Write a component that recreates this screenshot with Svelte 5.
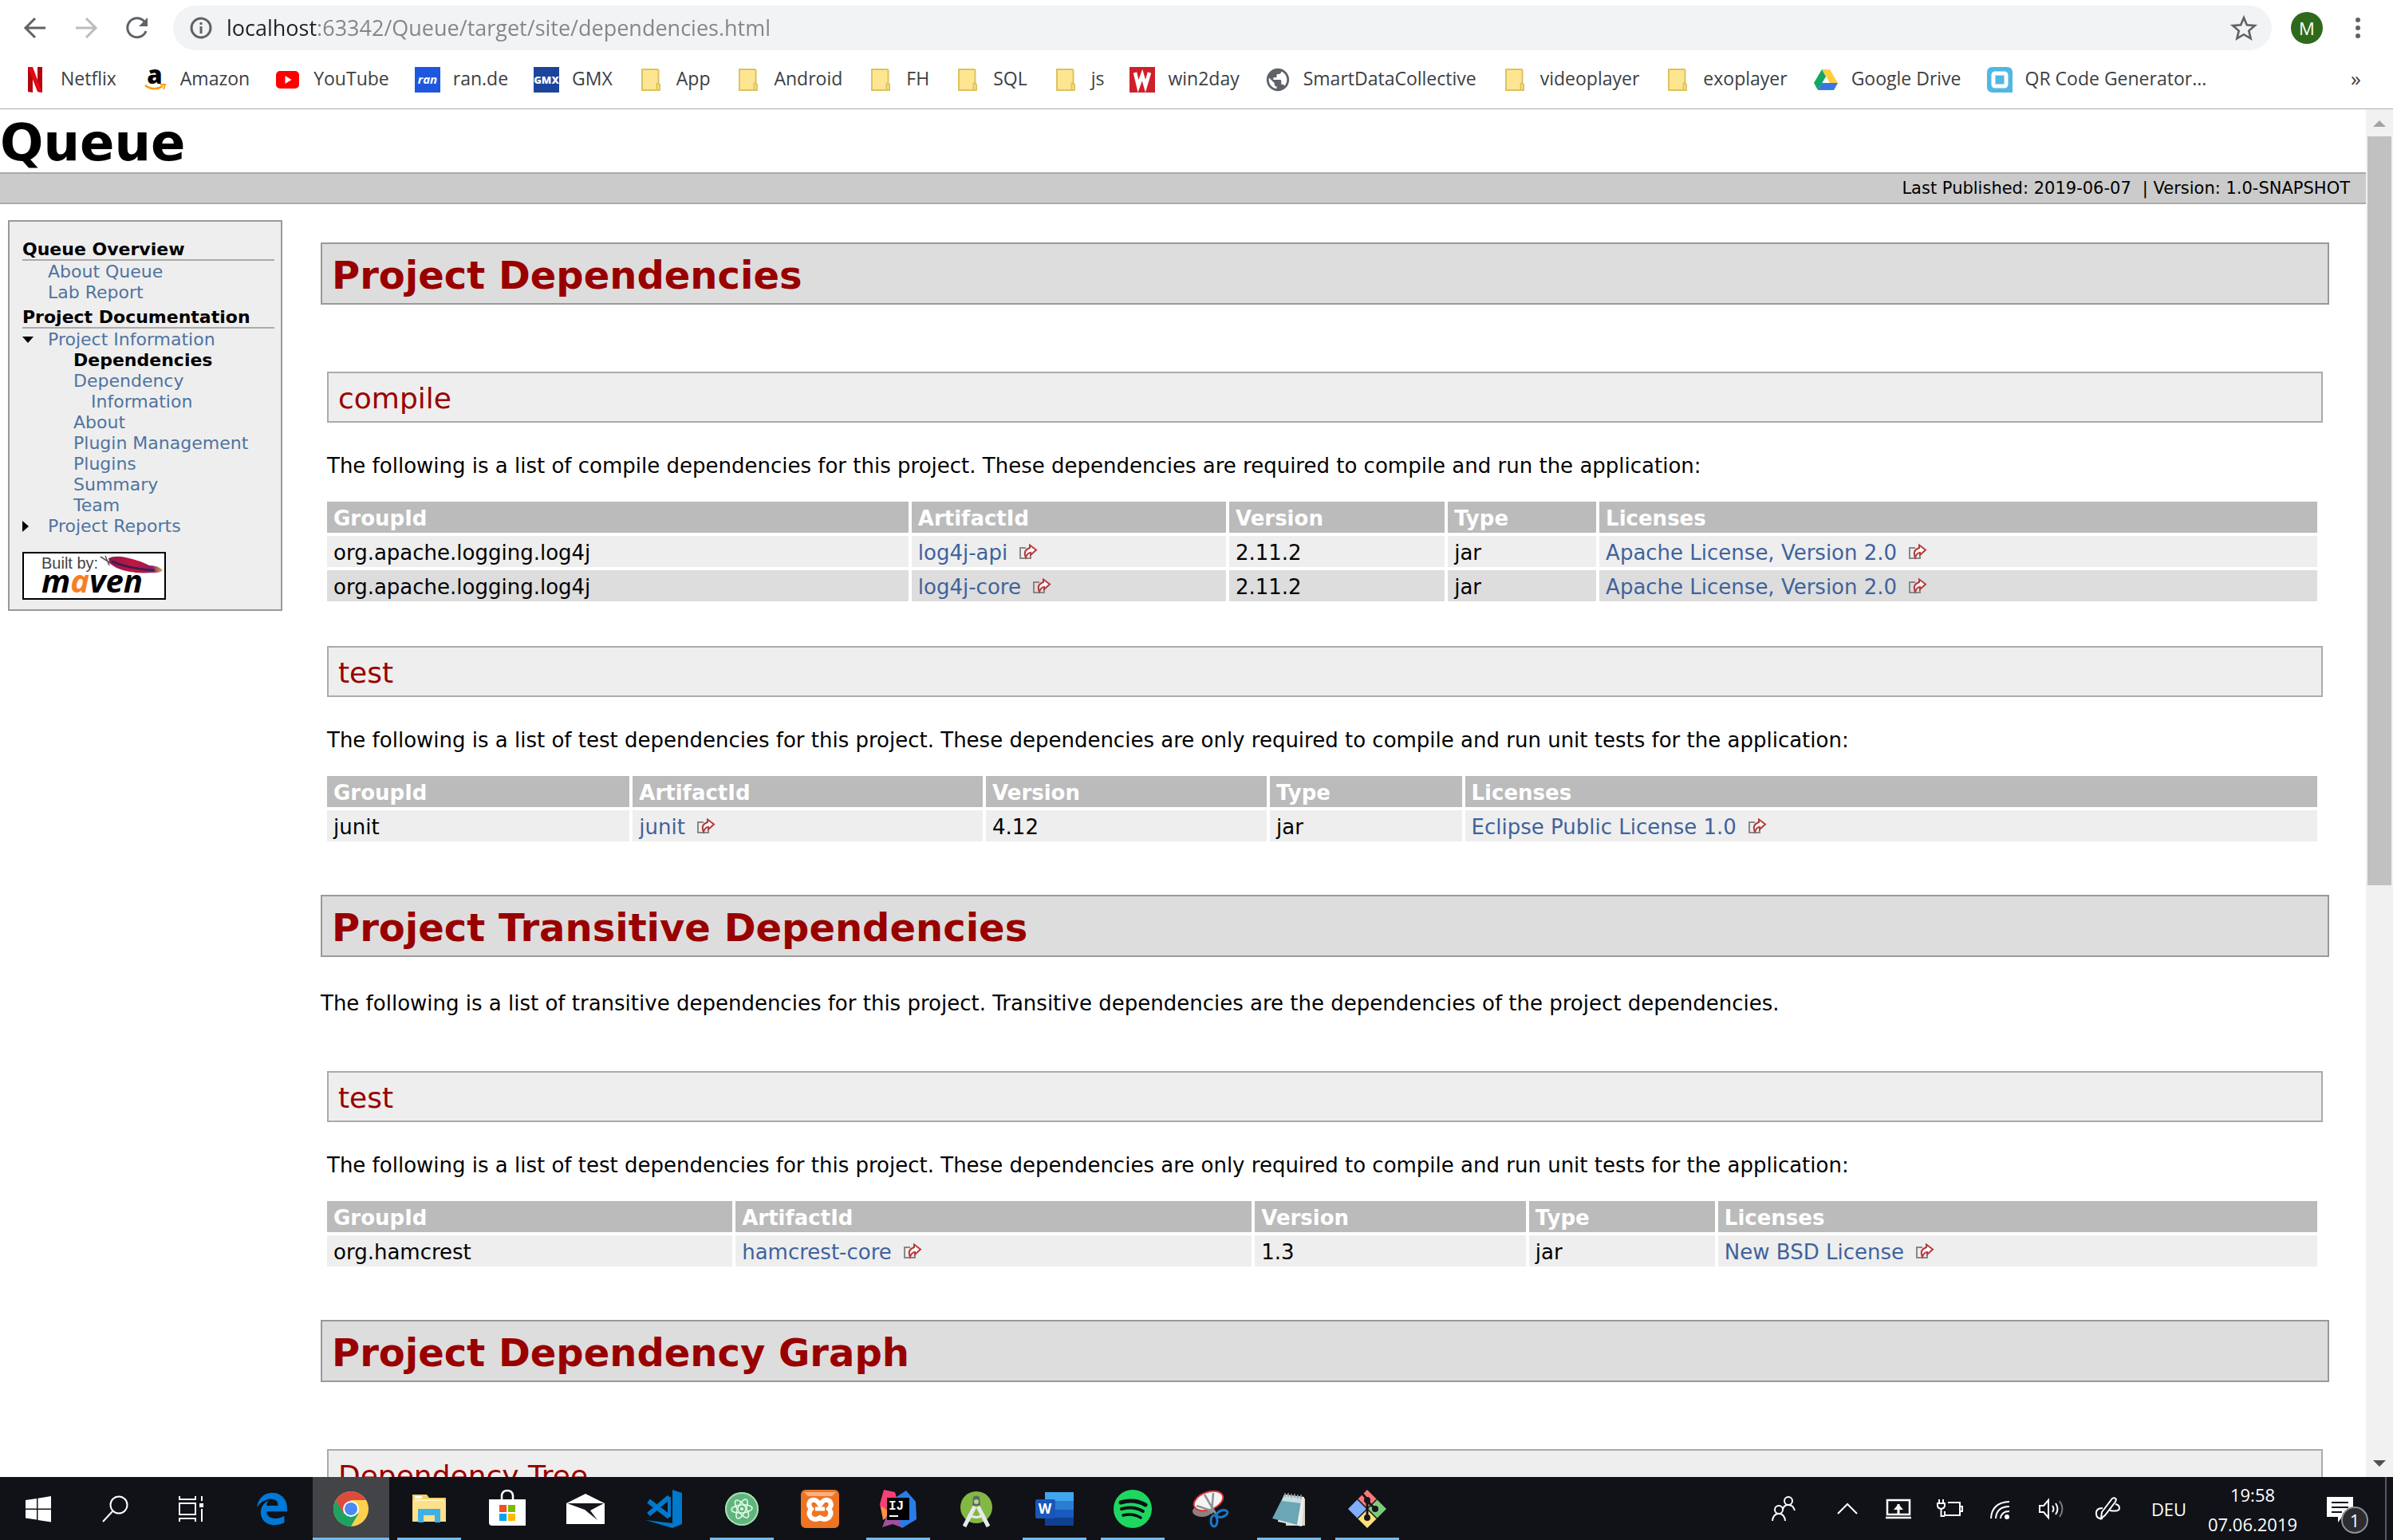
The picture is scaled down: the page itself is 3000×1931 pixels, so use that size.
<script>
  const bookmarks = [
    ['netflix', 'Netflix'], ['amazon', 'Amazon'], ['youtube', 'YouTube'], ['ran', 'ran.de'],
    ['gmx', 'GMX'], ['folder', 'App'], ['folder', 'Android'], ['folder', 'FH'],
    ['folder', 'SQL'], ['folder', 'js'], ['win2day', 'win2day'], ['globe', 'SmartDataCollective'],
    ['folder', 'videoplayer'], ['folder', 'exoplayer'], ['drive', 'Google Drive'], ['qr', 'QR Code Generator...']
  ];

  const infoLinks = ['Dependency Information', 'About', 'Plugin Management', 'Plugins', 'Summary', 'Team'];

  const columns = ['GroupId', 'ArtifactId', 'Version', 'Type', 'Licenses'];

  const compile = {
    title: 'compile',
    text: 'The following is a list of compile dependencies for this project. These dependencies are required to compile and run the application:',
    widths: [29.4, 15.9, 10.9, 7.5, 36.3],
    rows: [
      ['org.apache.logging.log4j', 'log4j-api', '2.11.2', 'jar', 'Apache License, Version 2.0'],
      ['org.apache.logging.log4j', 'log4j-core', '2.11.2', 'jar', 'Apache License, Version 2.0']
    ]
  };
  const test = {
    title: 'test',
    text: 'The following is a list of test dependencies for this project. These dependencies are only required to compile and run unit tests for the application:',
    widths: [15.3, 17.7, 14.2, 9.7, 43.1],
    rows: [['junit', 'junit', '4.12', 'jar', 'Eclipse Public License 1.0']]
  };
  const transitive = {
    title: 'test',
    text: test.text,
    widths: [20.5, 26.1, 13.7, 9.4, 30.3],
    rows: [['org.hamcrest', 'hamcrest-core', '1.3', 'jar', 'New BSD License']]
  };

  const apps = [
    ['start', 'Start'], ['search', 'Search'], ['taskview', 'Task View'], ['edge', 'Edge'],
    ['chrome', 'Chrome', 'active'], ['explorer', 'File Explorer', 'open'], ['store', 'Store'], ['mail', 'Mail'],
    ['vscode', 'VS Code'], ['atom', 'Atom', 'open'], ['xampp', 'XAMPP'], ['idea', 'IntelliJ IDEA', 'open'],
    ['studio', 'Android Studio'], ['word', 'Word', 'open'], ['spotify', 'Spotify', 'open'], ['snip', 'Snipping Tool'],
    ['notepad', 'Notepad', 'open'], ['git', 'Git Bash', 'open']
  ];
  const tray = [
    ['people', 'People'], ['chevron', 'Show hidden icons'], ['update', 'Update'], ['power', 'Power'],
    ['wifi', 'Network'], ['sound', 'Volume'], ['pen', 'Ink Workspace']
  ];

  let address = $state('localhost:63342/Queue/target/site/dependencies.html');
</script>

{#snippet favicon(name)}
  <svg class="favicon" viewBox="0 0 32 32" aria-hidden="true">
    {#if name === 'netflix'}
      <path d="M7 0h6v32l-6-1z" fill="#b1060f" /><path d="M19 0h6v32l-6-1z" fill="#b1060f" /><path d="M7 0h6l12 32-6-1z" fill="#e50914" />
    {:else if name === 'amazon'}
      <text x="16" y="21" text-anchor="middle" font-family="Open Sans, sans-serif" font-weight="800" font-size="31" fill="#000">a</text>
      <path d="M4 23q11 8 22 1" fill="none" stroke="#f90" stroke-width="2.4" /><path d="M23 22h6l-2 6" fill="none" stroke="#f90" stroke-width="1.8" />
    {:else if name === 'youtube'}
      <rect x="1" y="5" width="29" height="22" rx="5" fill="#f00" /><path d="M12.5 11v10l8-5z" fill="#fff" />
    {:else if name === 'ran'}
      <rect width="32" height="32" fill="#1d57e0" /><text x="16" y="21" text-anchor="middle" font-family="Open Sans, sans-serif" font-weight="700" font-style="italic" font-size="15" fill="#fff">ran</text>
    {:else if name === 'gmx'}
      <rect width="32" height="32" fill="#1c449b" /><text x="16" y="21" text-anchor="middle" font-family="Open Sans, sans-serif" font-weight="800" font-size="13" fill="#fff">GMX</text>
    {:else if name === 'folder'}
      <path d="M5 3h19q1.5 0 1.5 1.5v16l1.5 1.5v7H5z" fill="#fee592" stroke="#dcc35e" stroke-width="2" /><path d="M23.5 29v-7q0-2 2-2" fill="none" stroke="#dcc35e" stroke-width="2" />
    {:else if name === 'win2day'}
      <rect width="32" height="32" fill="#cf1f2b" /><path d="M7 7l4 17 5-14 4 14 5-17" fill="none" stroke="#fff" stroke-width="4.5" />
    {:else if name === 'globe'}
      <svg x="-1" y="-1" width="34" height="34" viewBox="0 0 24 24"><path fill="#5f6368" d="M12 2C6.48 2 2 6.48 2 12s4.48 10 10 10 10-4.48 10-10S17.52 2 12 2zm-1 17.93c-3.950-.490-7-3.850-7-7.930 0-.620.080-1.210.210-1.790L9 15v1c0 1.100.900 2 2 2v1.930zm6.900-2.540c-.260-.810-1-1.390-1.900-1.390h-1v-3c0-.550-.450-1-1-1H8v-2h2c.550 0 1-.450 1-1V7h2c1.100 0 2-.900 2-2v-.410c2.930 1.190 5 4.060 5 7.410 0 2.080-.800 3.970-2.100 5.390z" /></svg>
    {:else if name === 'drive'}
      <path d="M11 3h10l10 17H21z" fill="#ffcf3f" /><path d="M11 3l5 9L6 29 1 20z" fill="#11a861" /><path d="M11 20h20l-5 9H6z" fill="#3777e3" />
    {:else if name === 'qr'}
      <path d="M7 0h18q7 0 7 7v25H7q-7 0-7-7V7q0-7 7-7z" fill="#50b7e4" /><rect x="8" y="8" width="16" height="16" rx="2" fill="none" stroke="#fff" stroke-width="5" />
    {/if}
  </svg>
{/snippet}

{#snippet appIcon(name)}
  <svg class="app-icon" viewBox="0 0 48 48" aria-hidden="true">
    {#if name === 'start'}
      <path d="M8 13l14-2v12.5H8zM23.5 10.8L40 8v15.5H23.5zM8 25h14v12.5L8 35.5zM23.5 25H40v15.5l-16.5-2.5z" fill="#fff" />
    {:else if name === 'search'}
      <circle cx="27" cy="19" r="10.5" fill="none" stroke="#fff" stroke-width="2" /><path d="M19.5 26.5L7 40" stroke="#fff" stroke-width="2" />
    {:else if name === 'taskview'}
      <g fill="none" stroke="#fff" stroke-width="2"><path d="M5 8v4h20V8M5 40v-4h20v4M5 17h20v14H5zM33 8v6M33 24v16" /></g><rect x="30" y="17" width="5" height="5" fill="#fff" />
    {:else if name === 'edge'}
      <svg x="2" y="3" width="42" height="42" viewBox="0 0 512 512"><path fill="#0078d7" d="M486.29 243.67c0-44-7.76-84.46-28.81-122.4C416.5 47.88 343.91 8 258.89 8 119 7.72 40.62 113.21 26.06 227.68c42.42-61.31 117.07-121.38 220.37-125 0 0 109.67 0 99.42 105H170c6.37-37.39 18.55-59 34.34-78.93-75.05 34.9-121.85 96.1-120.75 188.32.83 71.45 50.13 144.84 120.75 172 83.35 31.84 192.77 7.2 240.13-21.33V363.31c-80.87 56.49-270.87 60.92-272.26-67.57h314.08z" /></svg>
    {:else if name === 'chrome'}
      <circle cx="24" cy="24" r="22" fill="#fdd14d" />
      <path d="M5 13A22 22 0 0 1 43 13H24l-10 17z" fill="#dd4b3e" /><path d="M5 13A22 22 0 0 0 24 46l9.5-16.5h-19z" fill="#1da25f" /><circle cx="24" cy="24" r="10" fill="#fff" /><circle cx="24" cy="24" r="8" fill="#4a8af4" />
    {:else if name === 'explorer'}
      <path d="M3 6h18l3 4h21v30H3z" fill="#f3cf62" /><path d="M5 12h38v5H5z" fill="#fff3c4" /><path d="M3 14h42v26H3z" fill="#fde08a" /><rect x="6" y="8" width="9" height="3" fill="#fff" /><path d="M10 41V24h28v17h-7V32H17v9z" fill="#3fb0e6" />
    {:else if name === 'store'}
      <path d="M17 13V7q1-6 7-6t7 6v6" fill="none" stroke="#fff" stroke-width="2.5" /><path d="M1 12h46v33H5q-4 0-4-4z" fill="#fff" /><path d="M14 19h9v9h-9z" fill="#f25022" /><path d="M25 19h9v9h-9z" fill="#7fba00" /><path d="M14 30h9v9h-9z" fill="#00a4ef" /><path d="M25 30h9v9h-9z" fill="#ffb900" />
    {:else if name === 'mail'}
      <path d="M0 17L24 5l24 12v26H0z" fill="#fff" /><path d="M1 17h46L30 26l9 12-16-13z" fill="#14161b" />
    {:else if name === 'vscode'}
      <path d="M35 0l12 4v39l-12 5L1 38l34 4z" fill="#0078cc" /><path d="M5 14L31 34M31 9L5 31" stroke="#0078cc" stroke-width="6" /><path d="M31 9v25" stroke="#0078cc" stroke-width="4" />
    {:else if name === 'atom'}
      <circle cx="24" cy="24" r="21" fill="#5fb57d" /><circle cx="24" cy="24" r="20" fill="none" stroke="#a8dfb4" stroke-width="2" />
      <g fill="none" stroke="#e3fbe6" stroke-width="1.6"><ellipse cx="24" cy="24" rx="5" ry="13" transform="rotate(25 24 24)" /><ellipse cx="24" cy="24" rx="5" ry="13" transform="rotate(85 24 24)" /><ellipse cx="24" cy="24" rx="5" ry="13" transform="rotate(-35 24 24)" /></g><circle cx="24" cy="24" r="2" fill="#e3fbe6" />
    {:else if name === 'xampp'}
      <rect width="48" height="48" rx="6" fill="#ee7424" /><path d="M4 3h40l-5 5H9z" fill="#f9b183" /><path d="M12 14q5-3 9 1l3 4 3-4q4-4 9-1 4 5-1 10 5 5 0 11-5 4-11 0-6 4-11 0-5-5 0-11-5-5-1-10z" fill="none" stroke="#fff" stroke-width="6" /><path d="M18 24h12" stroke="#fff" stroke-width="5" />
    {:else if name === 'idea'}
      <path d="M6 0l14 3 4 14L4 32 1 18z" fill="#f83f76" /><path d="M2 20l14 10-11 8z" fill="#f9953b" /><path d="M34 1l12 14 1 22-18 11-12-8V12z" fill="#2a7de8" /><path d="M4 47l14-36 10 36-11-4z" fill="#a0509f" /><rect x="10" y="10" width="28" height="28" fill="#000" /><text x="12" y="25" font-family="Liberation Mono, monospace" font-weight="700" font-size="16" fill="#fff">IJ</text><rect x="13" y="32" width="11" height="2" fill="#fff" />
    {:else if name === 'studio'}
      <circle cx="24" cy="22" r="20" fill="#83b843" /><path d="M20 9q4-3 8 0l1 11H19z" fill="#5d6870" /><circle cx="24" cy="15" r="3" fill="#b8d493" /><path d="M22 21L9 46M26 21l13 25" stroke="#e6e9e9" stroke-width="5" /><path d="M14 31q10 7 20 0" fill="none" stroke="#e6e9e9" stroke-width="3" />
    {:else if name === 'word'}
      <path d="M12 3h36v11H12z" fill="#41a5ee" /><path d="M12 14h36v11H12z" fill="#2b7cd3" /><path d="M12 25h36v10H12z" fill="#185abd" /><path d="M12 35h36v10H12z" fill="#103f91" /><rect y="12" width="25" height="24" rx="2" fill="#1a56b8" /><text x="12" y="30" text-anchor="middle" font-family="Open Sans, sans-serif" font-weight="700" font-size="17" fill="#fff">W</text>
    {:else if name === 'spotify'}
      <circle cx="24" cy="24" r="24" fill="#1ed760" /><g fill="none" stroke="#0c1015" stroke-linecap="round"><path d="M9 16q17-5 31 3" stroke-width="5" /><path d="M10 24q15-4 27 3" stroke-width="4" /><path d="M12 32q12-3 22 3" stroke-width="3.5" /></g>
    {:else if name === 'snip'}
      <ellipse cx="13" cy="27" rx="12" ry="7" fill="#8c8080" /><ellipse cx="21" cy="14" rx="19" ry="11" transform="rotate(-20 21 14)" fill="#f4f4f4" stroke="#d33" stroke-width="2" /><path d="M16 6l14 24M27 4l-2 26M6 20l24 8" stroke="#8d949b" stroke-width="2.5" /><g fill="none" stroke="#1c78c8" stroke-width="3"><ellipse cx="38" cy="30" rx="7" ry="4" transform="rotate(-20 38 30)" /><ellipse cx="28" cy="39" rx="4" ry="7" /></g>
    {:else if name === 'notepad'}
      <path d="M20 7l24 4v34H20z" fill="#d9d6c4" /><path d="M19 6l24 3-3 37L10 40z" fill="#e8eeee" /><path d="M18 6l22 3-6 35L3 36z" fill="#6ba6b4" /><path d="M18 6l22 3-1 8-24-3z" fill="#c7dde2" /><path d="M19 4v5M23 4v5M27 5v5M31 5v5M35 6v5M39 6v5" stroke="#999" stroke-width="1.5" />
    {:else if name === 'git'}
      <path d="M24 0l12 12-12 12-12-12z" fill="#f7797d" /><path d="M12 12l12 12-12 12L0 24z" fill="#81aeff" /><path d="M36 12l12 12-12 12-12-12z" fill="#7fc97c" /><path d="M24 24l12 12-12 12-12-12z" fill="#ffe07a" />
      <g fill="none" stroke="#14161b"><path d="M12 12l24 24M36 12L12 36" stroke-width="1.5" /><path d="M18 5l6 7v22M24 14l9 9" stroke-width="3" /></g><circle cx="24" cy="35" r="4" fill="#14161b" /><circle cx="34" cy="24" r="4" fill="#14161b" /><circle cx="24" cy="13" r="4" fill="#14161b" />
    {/if}
  </svg>
{/snippet}

{#snippet trayIcon(name)}
  <svg class="tray-icon" viewBox="0 0 32 32" fill="none" stroke="#fff" stroke-width="2" aria-hidden="true">
    {#if name === 'people'}
      <circle cx="22" cy="6" r="5" /><path d="M15 17q1-6 7-6t8 7" /><circle cx="10" cy="17" r="5" /><path d="M2 31q1-9 8-9t8 9" />
    {:else if name === 'chevron'}
      <path d="M4 22L16 10l12 12" />
    {:else if name === 'update'}
      <path d="M2 5h28v18H2zM0 27h32" stroke-width="2.5" /><path d="M16 10v12" stroke-width="3" /><path d="M10 17l6-7 6 7z" fill="#fff" stroke="none" />
    {:else if name === 'power'}
      <path d="M14 8h15v16H10v-5M30 13h2v6h-2" /><path d="M3 4v5M8 4v5M1 9h9v3q0 3-4.500 4Q1 15 1 12zM5.500 16v9H10" />
    {:else if name === 'wifi'}
      <path d="M4 28Q5 8 27 7" /><path d="M10 28q1-15 17-15" /><path d="M16 28q1-9 11-9" /><circle cx="24" cy="26" r="3" fill="#fff" stroke="none" />
    {:else if name === 'sound'}
      <path d="M1 12h5l6-7v22l-6-7H1z" /><path d="M17 12q3 4 0 8M21 9q5 7 0 14" /><path d="M26 6q7 10 0 20" stroke="#777b80" />
    {:else if name === 'pen'}
      <path d="M9 20L22 3q3-2 5 1l-1 3-13 17-5 4z" /><path d="M10 15q-9 0-8 8 1 6 8 5M19 18q12 2 12-3 0-4-5-5" />
    {/if}
  </svg>
{/snippet}

{#snippet external()}
  <svg class="external" viewBox="0 0 22 20" aria-hidden="true">
    <path d="M8 5H1v13h13v-3" fill="none" stroke="#888" stroke-width="2" />
    <path d="M13 1.5L21 7.500l-7 6.500v-3q-4 0-6 6-4-9 5-12z" fill="#fff" stroke="#b5393c" stroke-width="2" />
  </svg>
{/snippet}

{#snippet dependencySection(data)}
  <section class="scope">
    <h3>{data.title}</h3>
    <p>{data.text}</p>
    <table>
      <colgroup>
        {#each data.widths as width}<col style="width: {width}%" />{/each}
      </colgroup>
      <thead>
        <tr>{#each columns as column}<th scope="col">{column}</th>{/each}</tr>
      </thead>
      <tbody>
        {#each data.rows as row}
          <tr>
            {#each row as cell, i}
              <td>{#if i === 1 || i === 4}<a href="#{cell}">{cell}{@render external()}</a>{:else}{cell}{/if}</td>
            {/each}
          </tr>
        {/each}
      </tbody>
    </table>
  </section>
{/snippet}

<div class="desktop">
  <header class="browser">
    <div class="toolbar">
      <button class="nav" aria-label="Back"><svg viewBox="0 0 32 32"><path d="M29 16H5M16 4L4 16l12 12" fill="none" stroke="#5f6368" stroke-width="3" /></svg></button>
      <button class="nav" aria-label="Forward"><svg viewBox="0 0 32 32"><path d="M3 16h24M16 4l12 12-12 12" fill="none" stroke="#babcbe" stroke-width="3" /></svg></button>
      <button class="nav" aria-label="Reload"><svg viewBox="0 0 32 32"><path d="M27 20A12 12 0 1 1 25 8" fill="none" stroke="#5f6368" stroke-width="3" /><path d="M29 3v11H18z" fill="#5f6368" /></svg></button>
      <div class="omnibox">
        <svg class="info" viewBox="0 0 28 28" aria-hidden="true"><circle cx="14" cy="14" r="12" fill="none" stroke="#5f6368" stroke-width="3" /><path d="M14 12v9M14 7v3" stroke="#5f6368" stroke-width="3" /></svg>
        <input aria-label="Address" bind:value={address} spellcheck="false" />
        <button class="star" aria-label="Bookmark this page"><svg viewBox="0 0 32 32"><path d="M16 4l3.6 8.5 9.4.8-7.1 6.1 2.2 9.1L16 23.7l-8.100 4.800 2.200-9.100L3 13.300l9.400-.800z" fill="none" stroke="#5f6368" stroke-width="2.5" /></svg></button>
      </div>
      <button class="avatar" aria-label="Profile">M</button>
      <button class="more" aria-label="Menu"><svg viewBox="0 0 8 28"><circle cx="4" cy="4" r="3" /><circle cx="4" cy="14" r="3" /><circle cx="4" cy="24" r="3" /></svg></button>
    </div>
    <nav class="bookmarks" aria-label="Bookmarks">
      <div class="bookmark-list">
        {#each bookmarks as [icon, label]}
          <a href="#{label}">{@render favicon(icon)}<span>{label}</span></a>
        {/each}
      </div>
      <button class="overflow" aria-label="More bookmarks">»</button>
    </nav>
  </header>

  <div class="viewport">
    <div class="page">
      <h1>Queue</h1>
      <div class="breadcrumbs"><span>Last Published: 2019-06-07</span><span>| Version: 1.0-SNAPSHOT</span></div>
      <div class="columns">
        <nav class="sidebar" aria-label="Site">
          <h5>Queue Overview</h5>
          <ul>
            <li><a href="#about">About Queue</a></li>
            <li><a href="#report">Lab Report</a></li>
          </ul>
          <h5>Project Documentation</h5>
          <ul>
            <li class="expanded">
              <svg class="marker" viewBox="0 0 14 14" aria-hidden="true"><path d="M0 3h14l-7 8z" /></svg>
              <a href="#information">Project Information</a>
              <ul>
                <li><strong>Dependencies</strong></li>
                {#each infoLinks as link}<li><a href="#{link}">{link}</a></li>{/each}
              </ul>
            </li>
            <li class="collapsed">
              <svg class="marker" viewBox="0 0 14 14" aria-hidden="true"><path d="M0 0v14l8-7z" /></svg>
              <a href="#reports">Project Reports</a>
            </li>
          </ul>
          <a class="maven" href="#maven" aria-label="Built by Maven">
            <svg viewBox="0 0 180 60">
              <defs><linearGradient id="feather"><stop offset="0" stop-color="#8c1a4d" /><stop offset="0.45" stop-color="#c4153f" /><stop offset="0.8" stop-color="#8d1f5c" /><stop offset="1" stop-color="#d9b45c" /></linearGradient></defs>
              <rect x="1" y="1" width="178" height="58" fill="#fff" stroke="#000" stroke-width="2" />
              <text x="24" y="21" font-family="Liberation Sans, sans-serif" font-size="20" fill="#444">Built by:</text>
              <text x="24" y="51" font-family="Open Sans, sans-serif" font-size="40" font-weight="700" font-style="italic">m<tspan fill="#f77f23">a</tspan>ven</text>
              <path d="M98 6l14 9M104 5l5 12" stroke="#555" stroke-width="1.5" />
              <path d="M108 8q8-4 22-1 18 4 29 10 12 0 17 6-4 4-14 3-26 2-44-6-10-5-10-12z" fill="url(#feather)" />
              <path d="M112 12q24 10 54 11" fill="none" stroke="#3c1b56" stroke-width="2.5" />
            </svg>
          </a>
        </nav>

        <main>
          <h2>Project Dependencies</h2>
          <div class="after-title">{@render dependencySection(compile)}</div>
          {@render dependencySection(test)}
          <h2>Project Transitive Dependencies</h2>
          <p class="intro">The following is a list of transitive dependencies for this project. Transitive dependencies are the dependencies of the project dependencies.</p>
          {@render dependencySection(transitive)}
          <h2>Project Dependency Graph</h2>
          <section class="scope after-title"><h3>Dependency Tree</h3></section>
        </main>
      </div>
    </div>
    <div class="scrollbar" aria-hidden="true">
      <svg viewBox="0 0 34 34"><path d="M9 22l8-8 8 8z" fill="#a3a3a3" /></svg>
      <div class="track"><div class="thumb"></div></div>
      <svg viewBox="0 0 34 34"><path d="M9 13l8 8 8-8z" fill="#505050" /></svg>
    </div>
  </div>

  <footer class="taskbar">
    <div class="apps">
      {#each apps as [icon, label, status]}
        <button class="app {status ?? ''}" aria-label={label}>{@render appIcon(icon)}</button>
      {/each}
    </div>
    <div class="tray">
      {#each tray as [icon, label]}
        <button class={icon} aria-label={label}>{@render trayIcon(icon)}</button>
      {/each}
      <button class="language">DEU</button>
      <button class="clock"><span>19:58</span><span>07.06.2019</span></button>
      <button class="action" aria-label="Notifications">
        <svg viewBox="0 0 34 34" aria-hidden="true"><path d="M0 2h33v25H19l-5 7v-7H0z" fill="#fff" /><path d="M6 9h21M6 15h21M6 21h13" stroke="#101217" stroke-width="2" /></svg>
        <span class="badge">1</span>
      </button>
      <button class="show-desktop" aria-label="Show desktop"></button>
    </div>
  </footer>
</div>

<style>
  :global(body) { margin: 0; overflow: hidden; background: #fff; }
  * { box-sizing: border-box; }
  button { border: 0; padding: 0; margin: 0; background: none; font: inherit; color: inherit; display: flex; align-items: center; justify-content: center; }
  a { text-decoration: none; }
  svg { display: block; overflow: visible; }
  .desktop { height: 100vh; display: flex; flex-direction: column; font-family: "DejaVu Sans", Verdana, sans-serif; font-size: 26px; color: #000; }

  .browser { flex: none; padding-top: 7px; border-bottom: 1px solid #a9abad; font-family: "Open Sans", "Segoe UI", sans-serif; background: #fff; }
  .toolbar { display: flex; align-items: center; height: 56px; padding: 0 40px 0 12px; }
  .nav { width: 64px; height: 56px; }
  .nav svg { width: 32px; height: 32px; }
  .omnibox { flex: 1; display: flex; align-items: center; height: 56px; margin-left: 13px; padding: 0 18px 0 21px; border-radius: 28px; background: #f1f3f4; }
  .info { width: 28px; height: 28px; }
  input { flex: 1; height: 56px; margin-left: 18px; padding: 0 0 2px; border: 0; outline: 0; font: inherit; font-size: 27px; color: transparent; background: linear-gradient(90deg, #202124 113px, #80868b 113px); background-clip: text; }
  .star svg { width: 34px; height: 34px; }
  .avatar { width: 40px; height: 40px; margin-left: 24px; border-radius: 50%; background: #2f691b; color: #fff; font-size: 22px; }
  .more { width: 8px; margin-left: 40px; }
  .more svg { width: 8px; height: 28px; fill: #5f6368; }
  .bookmarks { display: flex; align-items: center; justify-content: space-between; height: 73px; padding: 0 40px 0 28px; color: #3c4043; font-size: 23px; }
  .bookmark-list { display: flex; gap: 32px; }
  .bookmark-list a { display: flex; align-items: center; gap: 16px; color: inherit; white-space: nowrap; }
  .bookmark-list span { padding-bottom: 3px; }
  .favicon { width: 32px; height: 32px; }
  .overflow { padding-bottom: 3px; font-size: 26px; }

  .viewport { flex: 1; min-height: 0; display: flex; overflow: hidden; }
  .page { flex: 1; min-width: 0; overflow: hidden; }
  h1, h2, h3, h5, p, ul { margin: 0; padding: 0; }
  h1 { padding-top: 5px; font-size: 64px; line-height: 74px; }
  .breadcrumbs { display: flex; justify-content: flex-end; gap: 14px; height: 40px; padding-right: 20px; border: solid #aaa; border-width: 2px 0; background: #cbcbcb; font-size: 21px; line-height: 37px; }
  .columns { display: flex; align-items: flex-start; }
  .sidebar { flex: none; width: 344px; margin: 20px 0 0 10px; padding: 22px 8px 12px 16px; border: 2px solid #999; background: #eee; font-size: 22px; line-height: 26px; }
  h5 { margin-bottom: 1px; border-bottom: 2px solid #aaa; font-size: 22px; line-height: 25px; white-space: nowrap; }
  ul + h5 { margin-top: 5px; }
  li { display: block; padding-left: 32px; white-space: nowrap; }
  li a { color: #4f74a0; }
  li li { padding: 0 24px 0 54px; text-indent: -22px; white-space: normal; }
  .expanded, .collapsed { display: grid; grid-template-columns: 32px 1fr; align-items: center; padding-left: 0; }
  .expanded ul { grid-column: 1 / -1; padding-left: 32px; }
  .marker { width: 14px; height: 14px; }
  .maven { display: block; width: 180px; margin-top: 19px; }

  main { flex: 1; min-width: 0; margin: 48px 46px 0 48px; }
  h2 { padding: 4px 12px 0; border: 2px solid #999; background: #ddd; color: #900; font-size: 48px; line-height: 70px; white-space: nowrap; }
  h3 { padding: 3px 12px 0; border: 2px solid #aaa; background: #eee; color: #900; font-size: 36px; font-weight: 400; line-height: 57px; }
  .scope { padding: 0 8px; }
  .scope + .scope, .after-title + .scope { margin-top: 56px; }
  .scope + h2 { margin-top: 67px; }
  h2 + .after-title { margin-top: 84px; }
  .intro + .scope { margin-top: 69px; }
  p { line-height: 32px; white-space: nowrap; }
  .intro { margin-top: 42px; }
  .scope p { margin: 38px 0 25px; }
  table { width: calc(100% + 1px); margin: 0 -4px -4px; border-collapse: separate; border-spacing: 4px; table-layout: fixed; }
  th, td { height: 39px; padding: 6px 8px 2px; line-height: 31px; text-align: left; white-space: nowrap; }
  th { background: #bbb; color: #fff; }
  td { background: #eee; }
  tbody tr:nth-child(even) td { background: #ddd; }
  td a { color: #3f639c; }
  .external { display: inline-block; width: 22px; height: 20px; margin-left: 15px; }

  .scrollbar { flex: none; width: 34px; display: flex; flex-direction: column; background: #f1f1f1; }
  .scrollbar svg { flex: none; width: 34px; height: 34px; }
  .track { flex: 1; padding: 0 2px; }
  .thumb { height: 57%; background: #c1c1c1; }

  .taskbar { flex: none; display: flex; justify-content: space-between; height: 79px; background: #101217; color: #fff; font-family: "Open Sans", "Segoe UI", sans-serif; font-size: 22px; }
  .apps { display: flex; gap: 2px; }
  .app { width: 96px; background: linear-gradient(#76b9ed, #76b9ed) bottom / 0 3px no-repeat; }
  .app.open { background-size: 80px 3px; }
  .app.active { background-color: #424448; background-size: 96px 3px; }
  .app-icon { width: 48px; height: 48px; }
  .tray { display: flex; }
  .tray button { width: 64px; }
  .tray .people { width: 96px; }
  .tray-icon { width: 32px; height: 32px; }
  .tray .pen { width: 76px; }
  .tray .language { width: 78px; }
  .tray .clock { flex-direction: column; width: 132px; padding-top: 2px; line-height: 37px; }
  .tray .action { position: relative; width: 88px; margin-right: 12px; }
  .action svg { width: 34px; height: 34px; }
  .badge { position: absolute; left: 45px; top: 37px; width: 34px; height: 34px; border: 2px solid #8e9093; border-radius: 50%; background: #2b2d31; line-height: 30px; text-align: center; }
  .tray .show-desktop { width: 10px; border-left: 2px solid #55585c; }
</style>
